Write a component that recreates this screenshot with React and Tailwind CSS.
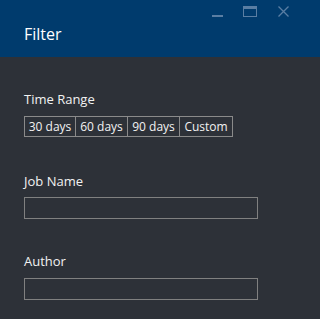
export default function App() {
  const ranges = ['30 days', '60 days', '90 days', 'Custom']

  return (
    <div
      className="w-full min-h-screen h-[319px] bg-[#2d3138] text-[#f2f2f2] flex flex-col overflow-hidden"
      style={{ fontFamily: '"Open Sans", "Noto Sans", sans-serif' }}
    >
      <div className="h-[57px] bg-[#003b6d] flex flex-col shrink-0">
        <div className="w-[297px] flex items-start justify-end pt-[6px] pr-[8px] h-[18px]">
          {/* minimize */}
          <svg width="11" height="11" viewBox="0 0 11 11" className="text-[#5a7ea3]">
            <rect x="0" y="9" width="11" height="2" fill="currentColor" />
          </svg>
          {/* maximize */}
          <svg width="14" height="11" viewBox="0 0 14 11" className="ml-[20px] text-[#5a7ea3]">
            <rect x="0.5" y="0.5" width="13" height="10" fill="none" stroke="currentColor" />
            <rect x="0" y="0" width="14" height="3" fill="currentColor" />
          </svg>
          {/* close */}
          <svg width="11" height="11" viewBox="0 0 11 11" className="ml-[21px] text-[#5a7ea3]">
            <path d="M0.5 0.5 L10.5 10.5 M10.5 0.5 L0.5 10.5" stroke="currentColor" strokeWidth="1.3" />
          </svg>
        </div>
        <h1 className="pl-6 mt-[5px] text-[16px] leading-[22px] font-normal text-white">Filter</h1>
      </div>

      <div className="px-6 pt-[33px] flex flex-col items-start">
        <label className="text-[13px] leading-[18px]">Time Range</label>
        <div className="mt-[8px] flex border border-[#8a8a8a] divide-x divide-[#8a8a8a]">
          {ranges.map(r => (
            <button
              key={r}
              type="button"
              className="w-[51px] [&:not(:first-child)]:w-[52px] h-[19px] flex items-center justify-center text-[12px] leading-none text-[#f2f2f2]"
            >
              {r}
            </button>
          ))}
        </div>

        <label className="mt-[35px] text-[13px] leading-[18px]">Job Name</label>
        <input
          type="text"
          className="mt-[7px] w-[234px] h-[22px] bg-transparent border border-[#808080] outline-none"
        />

        <label className="mt-[33px] text-[13px] leading-[18px]">Author</label>
        <input
          type="text"
          className="mt-[8px] w-[234px] h-[22px] bg-transparent border border-[#808080] outline-none"
        />
      </div>
    </div>
  )
}
